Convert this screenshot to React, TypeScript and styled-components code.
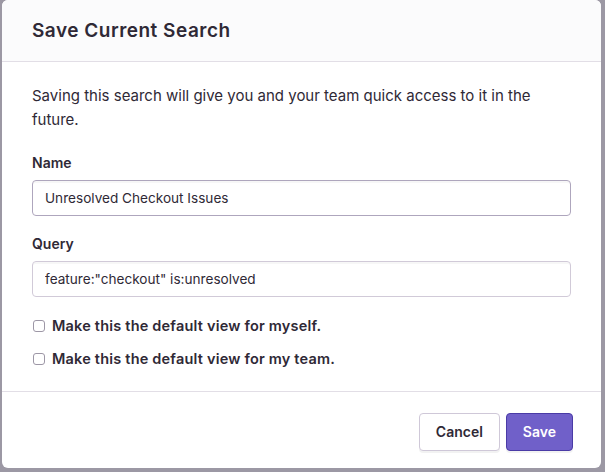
import React, { useState } from 'react';
import styled, { createGlobalStyle } from 'styled-components';

const GlobalStyle = createGlobalStyle`
  html, body {
    margin: 0;
    padding: 0;
    background: #9c98a4;
  }
  body {
    font-family: Inter, "Noto Sans", "Liberation Sans", sans-serif;
    color: #2f2936;
  }
`

const Backdrop = styled.div`
  width: 605px;
  height: 472px;
  padding: 0 4px 4px 2px;
  box-sizing: border-box;
  background: #9c98a4;
`

const Modal = styled.div`
  height: 100%;
  background: #fff;
  border-radius: 6px;
  overflow: hidden;
  display: flex;
  flex-direction: column;
`

const Header = styled.div`
  height: 62px;
  box-sizing: border-box;
  padding: 0 30px;
  display: flex;
  align-items: center;
  background: #fbfbfc;
  border-bottom: 1px solid #e2dee6;
`

const Title = styled.h4`
  margin: 0;
  font-size: 19px;
  font-weight: 600;
  letter-spacing: 0.5px;
  color: #2f2936;
`

const Body = styled.div`
  padding: 22px 30px 0;
  flex: 1;
`

const Intro = styled.p`
  margin: 0 0 22px;
  font-size: 15px;
  line-height: 24px;
  color: #2f2936;
`

const Field = styled.div<{ $last?: boolean }>`
  margin-bottom: ${p => (p.$last ? '19px' : '19px')};
`

const Label = styled.label`
  display: block;
  font-size: 14px;
  font-weight: 600;
  margin-bottom: 8px;
  line-height: 18px;
`

const Input = styled.input<{ $focused?: boolean }>`
  width: 100%;
  box-sizing: border-box;
  height: 36px;
  padding: 0 12px;
  border: 1px solid ${p => (p.$focused ? '#aea6bd' : '#d1cad8')};
  border-radius: 4px;
  font-family: inherit;
  font-size: 13.6px;
  color: #2f2936;
  background: #fff;
  box-shadow: inset 0 2px 0 rgba(0, 0, 0, 0.03);
  outline: none;
`

const CheckRow = styled.label`
  display: flex;
  align-items: center;
  gap: 7px;
  font-size: 14.5px;
  font-weight: 600;
  letter-spacing: 0.2px;
  margin-bottom: 14px;
  line-height: 19px;
  padding-left: 1px;
`

const Box = styled.input`
  margin: 0;
  width: 12px;
  height: 12px;
  appearance: none;
  border: 1px solid #9d97a6;
  border-radius: 3px;
  background: #fff;
`

const Footer = styled.div`
  height: 77px;
  box-sizing: border-box;
  border-top: 1px solid #e2dee6;
  display: flex;
  justify-content: flex-end;
  align-items: center;
  gap: 6px;
  padding: 3px 28px 0 0;
`

const Button = styled.button<{ $primary?: boolean }>`
  height: 38px;
  padding: 0 16px;
  border-radius: 4px;
  font-family: inherit;
  font-size: 14px;
  font-weight: 600;
  cursor: pointer;
  color: ${p => (p.$primary ? '#fff' : '#2f2936')};
  background: ${p => (p.$primary ? '#7060c9' : '#fff')};
  border: 1px solid ${p => (p.$primary ? '#4a3ba6' : '#cfc8d8')};
  box-shadow: 0 2px 0 rgba(0, 0, 0, 0.05);
`

export default function App() {
  const [name, setName] = useState('Unresolved Checkout Issues')
  const [query, setQuery] = useState('feature:"checkout" is:unresolved')

  return (
    <>
      <GlobalStyle />
      <Backdrop>
        <Modal>
          <Header>
            <Title>Save Current Search</Title>
          </Header>
          <Body>
            <Intro>
              Saving this search will give you and your team quick access to it in the future.
            </Intro>
            <Field>
              <Label>Name</Label>
              <Input $focused value={name} onChange={e => setName(e.target.value)} />
            </Field>
            <Field $last>
              <Label>Query</Label>
              <Input value={query} onChange={e => setQuery(e.target.value)} />
            </Field>
            <CheckRow>
              <Box type="checkbox" />
              Make this the default view for myself.
            </CheckRow>
            <CheckRow>
              <Box type="checkbox" />
              Make this the default view for my team.
            </CheckRow>
          </Body>
          <Footer>
            <Button>Cancel</Button>
            <Button $primary>Save</Button>
          </Footer>
        </Modal>
      </Backdrop>
    </>
  )
}
